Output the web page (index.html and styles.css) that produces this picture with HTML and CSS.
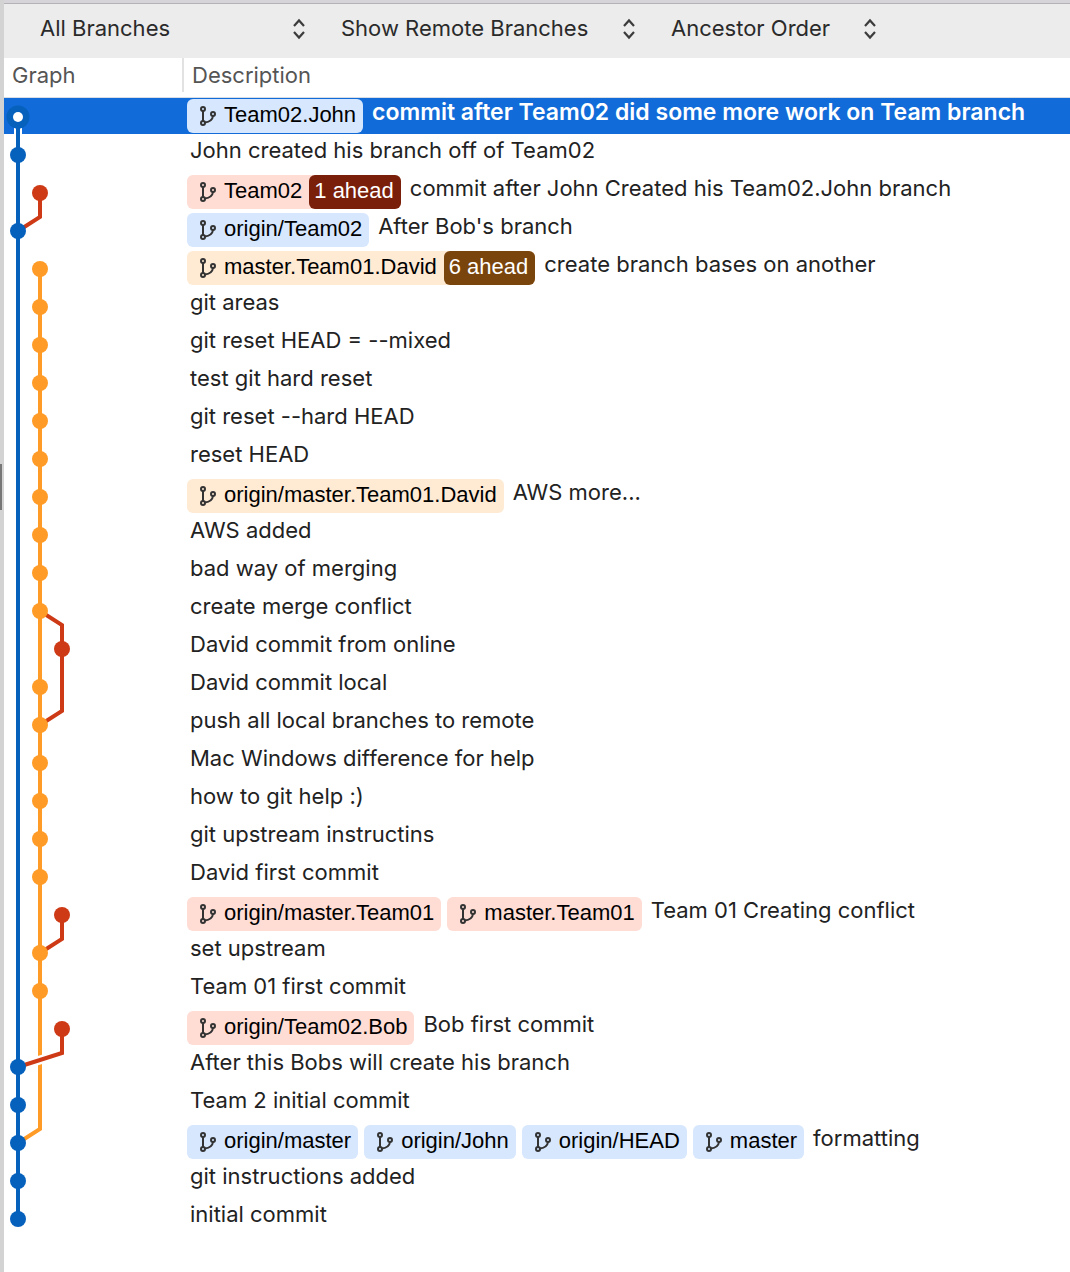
FILE: index.html
```html
<!DOCTYPE html>
<html lang="en">
<head>
<meta charset="utf-8">
<title>Commit history</title>
<link rel="stylesheet" href="styles.css">
</head>
<body>
<svg class="defs" aria-hidden="true">
  <symbol id="branch" viewBox="0 0 18 22">
    <g fill="none" stroke="#333" stroke-width="2">
      <circle cx="4" cy="4" r="2"/><circle cx="4" cy="18" r="2"/><circle cx="14" cy="9" r="2"/>
      <path d="M4 6V16M6 17.500C10 17 13.500 15 14 11"/>
    </g>
  </symbol>
  <symbol id="updown" viewBox="0 0 14 22">
    <path d="M2 8L7 2.500L12 8M2 14L7 19.500L12 14" fill="none" stroke="#3c3c3c" stroke-width="2.200"/>
  </symbol>
</svg>
<main class="panel">
  <div class="toolbar">
    <div class="picker picker-branches"><select aria-label="Branches"><option>All Branches</option></select><svg><use href="#updown"/></svg></div>
    <div class="picker picker-remotes"><select aria-label="Remote branches"><option>Show Remote Branches</option></select><svg><use href="#updown"/></svg></div>
    <div class="picker picker-order"><select aria-label="Order"><option>Ancestor Order</option></select><svg><use href="#updown"/></svg></div>
  </div>
  <div class="history">
    <table class="commits">
      <thead><tr><th class="col-graph" scope="col">Graph</th><th scope="col"><span class="heading">Description</span></th></tr></thead>
      <tbody>
        <tr class="selected"><td></td><td><div class="row"><span class="badge blue"><svg><use href="#branch"/></svg>Team02.John</span><span class="message">commit after Team02 did some more work on Team branch</span></div></td></tr>
        <tr><td></td><td><div class="row"><span class="message">John created his branch off of Team02</span></div></td></tr>
        <tr><td></td><td><div class="row"><span class="badge red"><svg><use href="#branch"/></svg>Team02<b class="ahead">1 ahead</b></span><span class="message">commit after John Created his Team02.John branch</span></div></td></tr>
        <tr><td></td><td><div class="row"><span class="badge blue"><svg><use href="#branch"/></svg>origin/Team02</span><span class="message">After Bob's branch</span></div></td></tr>
        <tr><td></td><td><div class="row"><span class="badge orange"><svg><use href="#branch"/></svg>master.Team01.David<b class="ahead">6 ahead</b></span><span class="message">create branch bases on another</span></div></td></tr>
        <tr><td></td><td><div class="row"><span class="message">git areas</span></div></td></tr>
        <tr><td></td><td><div class="row"><span class="message">git reset HEAD = --mixed</span></div></td></tr>
        <tr><td></td><td><div class="row"><span class="message">test git hard reset</span></div></td></tr>
        <tr><td></td><td><div class="row"><span class="message">git reset --hard HEAD</span></div></td></tr>
        <tr><td></td><td><div class="row"><span class="message">reset HEAD</span></div></td></tr>
        <tr><td></td><td><div class="row"><span class="badge orange"><svg><use href="#branch"/></svg>origin/master.Team01.David</span><span class="message">AWS more...</span></div></td></tr>
        <tr><td></td><td><div class="row"><span class="message">AWS added</span></div></td></tr>
        <tr><td></td><td><div class="row"><span class="message">bad way of merging</span></div></td></tr>
        <tr><td></td><td><div class="row"><span class="message">create merge conflict</span></div></td></tr>
        <tr><td></td><td><div class="row"><span class="message">David commit from online</span></div></td></tr>
        <tr><td></td><td><div class="row"><span class="message">David commit local</span></div></td></tr>
        <tr><td></td><td><div class="row"><span class="message">push all local branches to remote</span></div></td></tr>
        <tr><td></td><td><div class="row"><span class="message">Mac Windows difference for help</span></div></td></tr>
        <tr><td></td><td><div class="row"><span class="message">how to git help :)</span></div></td></tr>
        <tr><td></td><td><div class="row"><span class="message">git upstream instructins</span></div></td></tr>
        <tr><td></td><td><div class="row"><span class="message">David first commit</span></div></td></tr>
        <tr><td></td><td><div class="row"><span class="badge red"><svg><use href="#branch"/></svg>origin/master.Team01</span><span class="badge red"><svg><use href="#branch"/></svg>master.Team01</span><span class="message">Team 01 Creating conflict</span></div></td></tr>
        <tr><td></td><td><div class="row"><span class="message">set upstream</span></div></td></tr>
        <tr><td></td><td><div class="row"><span class="message">Team 01 first commit</span></div></td></tr>
        <tr><td></td><td><div class="row"><span class="badge red"><svg><use href="#branch"/></svg>origin/Team02.Bob</span><span class="message">Bob first commit</span></div></td></tr>
        <tr><td></td><td><div class="row"><span class="message">After this Bobs will create his branch</span></div></td></tr>
        <tr><td></td><td><div class="row"><span class="message">Team 2 initial commit</span></div></td></tr>
        <tr><td></td><td><div class="row"><span class="badge blue"><svg><use href="#branch"/></svg>origin/master</span><span class="badge blue"><svg><use href="#branch"/></svg>origin/John</span><span class="badge blue"><svg><use href="#branch"/></svg>origin/HEAD</span><span class="badge blue"><svg><use href="#branch"/></svg>master</span><span class="message">formatting</span></div></td></tr>
        <tr><td></td><td><div class="row"><span class="message">git instructions added</span></div></td></tr>
        <tr><td></td><td><div class="row"><span class="message">initial commit</span></div></td></tr>
      </tbody>
    </table>
    <!-- Lanes at x = 14, 36 and 58; one commit every 38 units from y = 19 -->
    <svg class="graph" viewBox="0 0 100 1140" role="img" aria-label="Commit graph">
      <path d="M14 30V38" stroke="#fff" stroke-width="8"/>
      <g fill="none" stroke-width="4">
        <path d="M36 171V1031L14 1045" stroke="#ff9b26"/>
        <path d="M58 931V955L14 969" stroke="#fff" stroke-width="9"/>
        <g stroke="#cd3a15">
          <path d="M36 95V119L14 133"/>
          <path d="M36 513L58 527V613L36 627"/>
          <path d="M58 817V841L36 855"/>
          <path d="M58 931V955L14 969"/>
        </g>
        <path d="M14 19V1121" stroke="#0661bd"/>
      </g>
      <g fill="#0661bd">
        <circle cx="14" cy="19" r="11.500"/><circle cx="14" cy="57" r="8"/><circle cx="14" cy="133" r="8"/>
        <circle cx="14" cy="969" r="8"/><circle cx="14" cy="1007" r="8"/><circle cx="14" cy="1045" r="8"/><circle cx="14" cy="1083" r="8"/><circle cx="14" cy="1121" r="8"/>
      </g>
      <circle cx="14" cy="19" r="5" fill="#fff"/>
      <g fill="#cd3a15">
        <circle cx="36" cy="95" r="8"/><circle cx="58" cy="551" r="8"/><circle cx="58" cy="817" r="8"/><circle cx="58" cy="931" r="8"/>
      </g>
      <g fill="#ff9b26">
        <circle cx="36" cy="171" r="8"/><circle cx="36" cy="209" r="8"/><circle cx="36" cy="247" r="8"/><circle cx="36" cy="285" r="8"/>
        <circle cx="36" cy="323" r="8"/><circle cx="36" cy="361" r="8"/><circle cx="36" cy="399" r="8"/><circle cx="36" cy="437" r="8"/>
        <circle cx="36" cy="475" r="8"/><circle cx="36" cy="513" r="8"/><circle cx="36" cy="589" r="8"/><circle cx="36" cy="627" r="8"/>
        <circle cx="36" cy="665" r="8"/><circle cx="36" cy="703" r="8"/><circle cx="36" cy="741" r="8"/><circle cx="36" cy="779" r="8"/>
        <circle cx="36" cy="855" r="8"/><circle cx="36" cy="893" r="8"/>
      </g>
    </svg>
  </div>
</main>
<div class="splitter"></div>
</body>
</html>
```
FILE: styles.css
```css
* { box-sizing: border-box; }

body {
  margin: 0;
  background: #fff;
  color: #222;
  font: 22px/28px Inter, "Liberation Sans", sans-serif;
}

.defs { display: none; }

.panel {
  min-height: 100vh;
  border-left: 4px solid #d3d3d3;
}

.toolbar {
  display: flex;
  gap: 35px;
  height: 58px;
  padding: 11px 36px 0;
  border-top: 3px solid #d6d4d8;
  background: #ececec;
  box-shadow: inset 0 1px #b4b2b6;
}

.picker {
  position: relative;
  height: 28px;
}
.picker-branches { width: 266px; }
.picker-remotes { width: 295px; }
.picker-order { width: 206px; }

.picker select {
  appearance: none;
  width: 100%;
  height: 28px;
  padding: 0;
  border: 0;
  background: none;
  color: #2a2a2a;
  font: inherit;
}

.picker svg {
  position: absolute;
  top: 4px;
  right: 0;
  width: 14px;
  height: 22px;
  pointer-events: none;
}

.history { position: relative; }

.commits {
  width: 100%;
  border-spacing: 0;
  table-layout: fixed;
}

.commits th {
  height: 40px;
  padding: 0 0 5px;
  border-bottom: 1px solid #d9dde4;
  color: #555;
  font-weight: 400;
  text-align: left;
}
.commits .col-graph {
  width: 178px;
  padding-left: 8px;
}
.heading {
  display: block;
  height: 34px;
  padding: 3px 0 0 8px;
  border-left: 2px solid #e2e2e2;
}

.commits td {
  height: 38px;
  padding: 0;
  border-bottom: 2px solid #fff;
}

.row {
  display: flex;
  gap: 6px;
  height: 36px;
  padding-left: 5px;
  white-space: nowrap;
}

.message { padding-left: 3px; }

.selected td { background: #116bd8; }
.selected .message {
  color: #fff;
  font-size: 23px;
  font-weight: 600;
}

.badge {
  display: flex;
  height: 34px;
  margin-top: 1px;
  padding: 0 7px 0 12px;
  border-radius: 6px;
  color: #000;
  font: 22px/32px "Liberation Sans", Arial, sans-serif;
}
.badge svg {
  width: 18px;
  height: 22px;
  margin: 6px 7px 0 0;
}
.blue { background: #d6e7fe; }
.red { background: #ffddd5; }
.orange { background: #ffead4; }

.ahead {
  margin: 0 -7px 0 7px;
  padding: 0 7px 0 5px;
  border-radius: 6px;
  color: #fff;
  font-weight: 400;
}
.red .ahead { background: #7a1f09; }
.orange .ahead { background: #7a450c; }

.graph {
  position: absolute;
  top: 40px;
  left: 0;
  width: 100px;
  height: 1140px;
  pointer-events: none;
}

.splitter {
  position: absolute;
  top: 464px;
  left: 0;
  width: 2px;
  height: 46px;
  background: #777;
}
```
